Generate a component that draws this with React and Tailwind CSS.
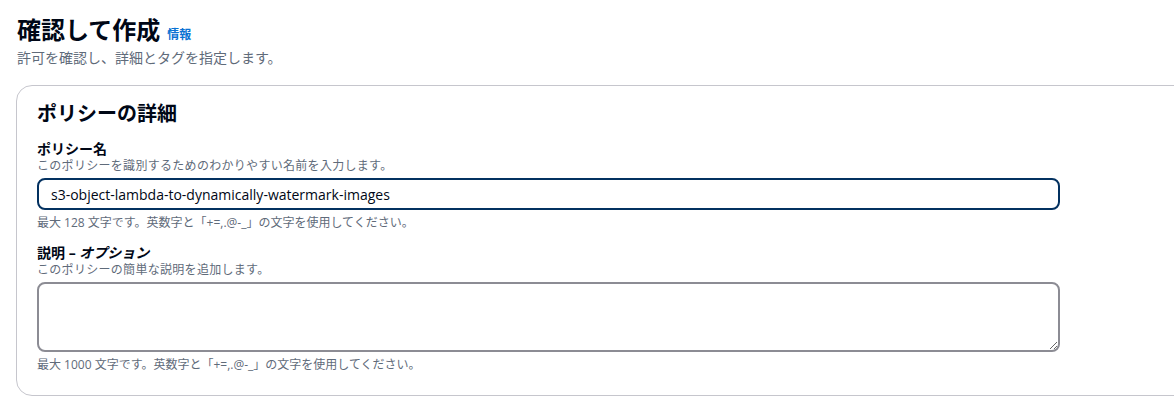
import React from 'react';

const font = { fontFamily: '"Open Sans", "Noto Sans CJK JP", sans-serif' };

function Field({ label, optional, description, constraint, children }) {
  return (
    <div className="flex flex-col">
      <div className="text-[14px] leading-[18px] font-bold text-[#000716]">
        {label}
        {optional && (
          <>
            {' – '}
            <i>{optional}</i>
          </>
        )}
      </div>
      <div className="text-[12px] leading-[16px] tracking-[0.3px] text-[#5f6b7a]">{description}</div>
      <div className="mt-[4px]">{children}</div>
      <div className="mt-[5px] text-[12px] leading-[16px] text-[#5f6b7a]">{constraint}</div>
    </div>
  );
}

export default function App() {
  return (
    <div className="w-[1174px] h-[406px] overflow-hidden bg-white px-4 pt-[15px]" style={font}>
      <div className="flex items-baseline pl-[1px]">
        <h1 className="text-[24px] leading-[30px] font-bold text-[#000716]">確認して作成</h1>
        <a className="ml-[7px] text-[12px] leading-[16px] font-bold text-[#0972d3]" href="#">
          情報
        </a>
      </div>
      <p className="pl-[1px] mt-[3px] text-[14px] leading-[20px] text-[#5f6b7a]">
        許可を確認し、詳細とタグを指定します。
      </p>

      <section className="mt-[17px] w-[1200px] rounded-[16px] border border-[#c6c6cd] px-[20px] pt-[16px] pb-[22px]">
        <h2 className="text-[20px] leading-[24px] font-bold text-[#000716]">ポリシーの詳細</h2>

        <div className="mt-[14px] flex flex-col gap-[13px]">
          <Field
            label="ポリシー名"
            description="このポリシーを識別するためのわかりやすい名前を入力します。"
            constraint="最大 128 文字です。英数字と「+=,.@-_」の文字を使用してください。"
          >
            <input
              className="block w-[1023px] h-[32px] rounded-[8px] border-2 border-[#033160] px-[12px] text-[14px] text-[#000716] outline-none"
              defaultValue="s3-object-lambda-to-dynamically-watermark-images"
              style={font}
            />
          </Field>

          <Field
            label="説明"
            optional="オプション"
            description="このポリシーの簡単な説明を追加します。"
            constraint="最大 1000 文字です。英数字と「+=,.@-_」の文字を使用してください。"
          >
            <textarea
              className="block w-[1023px] h-[70px] rounded-[8px] border-2 border-[#8c8c94] px-[12px] py-[4px] text-[14px] text-[#000716] outline-none"
              style={font}
            />
          </Field>
        </div>
      </section>
    </div>
  );
}
